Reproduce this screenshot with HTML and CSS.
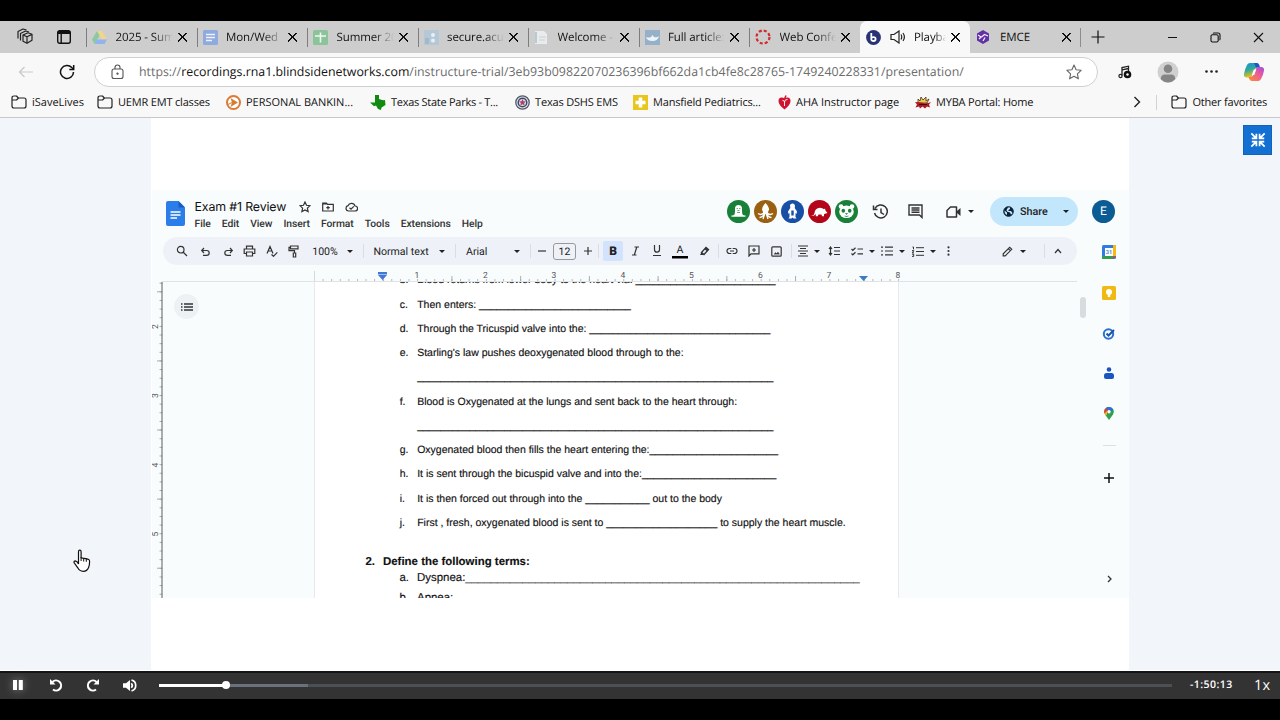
FILE: index.html
```
<!DOCTYPE html>
<html lang="en">
<head>
  <meta charset="UTF-8" />
  <meta name="viewport" content="width=device-width, initial-scale=1.0" />
  <title>Playback</title>
  <link rel="stylesheet" href="styles.css">
</head>
<body>

  <!-- Tabs -->
  <div class="tabbar">
    <div class="tab-tools">
      <svg width="18" height="18" viewBox="0 0 18 18" fill="none" stroke="#222" stroke-width="1.2" stroke-linejoin="round"><path d="M7 7l5-2.200 4 1.500v6l-5 3-4-2z"/><path d="M7 7l4 1.700 5-2.300M11 8.700v6.500"/><path d="M4.500 12.500v-7l5-2.500 3.500 1"/><path d="M2 10.500v-7l5-2.500 3.500 1"/></svg>
      <svg width="14" height="14" viewBox="0 0 14 14" fill="none" stroke="#111" stroke-width="1.400"><rect x="0.700" y="0.700" width="12.600" height="12.600" rx="2"/><path d="M1 2.500h12" stroke-width="3"/><path d="M4.200 4v9"/></svg>
    </div>
    <div class="tab">
      <svg width="15" height="15" viewBox="0 0 15 15"><path d="M5 1h5L5 10 2.500 14 0 9.500z" fill="#8cc9a0"/><path d="M5 1h5l5 8.500h-5z" fill="#f0d68a"/><path d="M5 9.500h10L12.500 14h-10z" fill="#92b4ee"/></svg>
      <span class="tab-title">2025 - Sum</span><span class="x"></span>
    </div>
    <div class="tab">
      <svg width="15" height="15" viewBox="0 0 15 15"><rect width="15" height="15" rx="1.500" fill="#8eaade"/><path d="M3 4.500h9M3 7.500h9M3 10.500h6" stroke="#eef3fb" stroke-width="1.300"/></svg>
      <span class="tab-title">Mon/Wed</span><span class="x"></span>
    </div>
    <div class="tab">
      <svg width="15" height="15" viewBox="0 0 15 15"><rect width="15" height="15" rx="1.500" fill="#8cc49a"/><path d="M2 6h11M7.500 2.500v10" stroke="#eef8f0" stroke-width="1.600"/></svg>
      <span class="tab-title">Summer 20</span><span class="x"></span>
    </div>
    <div class="tab">
      <svg width="15" height="15" viewBox="0 0 15 15"><rect width="15" height="15" fill="#b4c8d8"/><circle cx="9" cy="5" r="2" fill="#e8eff4"/><circle cx="9" cy="10.500" r="2" fill="#e8eff4"/><rect x="1" y="8" width="4" height="6" fill="#a2b9cc"/></svg>
      <span class="tab-title">secure.acu</span><span class="x"></span>
    </div>
    <div class="tab">
      <svg width="15" height="15" viewBox="0 0 15 15"><path d="M1 1h9l3 3v10H1z" fill="#e9ebec"/><path d="M2 2v11" stroke="#b7cbd1" stroke-width="2"/><path d="M5 7h7M5 10h6" stroke="#c9d1d4"/></svg>
      <span class="tab-title">Welcome -</span><span class="x"></span>
    </div>
    <div class="tab">
      <svg width="15" height="15" viewBox="0 0 15 15"><rect width="15" height="15" fill="#95b0c9"/><path d="M1 7q3 1 5 0l1.500-2L9 7q3 1 5-1-1 5-6.500 5T1 7z" fill="#edf3f7"/></svg>
      <span class="tab-title">Full article:</span><span class="x"></span>
    </div>
    <div class="tab no-line">
      <svg width="16" height="16" viewBox="0 0 16 16"><circle cx="8" cy="8" r="6.500" fill="none" stroke="#cf2c2e" stroke-width="2.200" stroke-dasharray="3.100 2"/></svg>
      <span class="tab-title">Web Confe</span><span class="x"></span>
    </div>
    <div class="tab active">
      <svg width="15" height="15" viewBox="0 0 15 15"><circle cx="7.500" cy="7.500" r="7.400" fill="#283274"/><path d="M5.300 3v6.300q.2 1.700 2.200 1.700t2.100-1.900-2.100-2-2.200 1.500" fill="none" stroke="#fff" stroke-width="1.800"/></svg>
      <svg class="sound" width="16" height="14" viewBox="0 0 16 14" fill="none" stroke="#222" stroke-width="1.200"><path d="M1 4.500h3L9 1v12L4 9.500H1z"/><path d="M11 4.500q1.500 2.500 0 5M13 3q2.800 4 0 8"/></svg>
      <span class="tab-title">Playba</span><span class="x"></span>
    </div>
    <div class="tab last">
      <svg width="14" height="14" viewBox="0 0 14 14"><path d="M7 0l6 3.500v7L7 14l-6-3.500v-7z" fill="#6230a4"/><path d="M2 5l3 2-2 2M5.500 7l3-2.500L12 6M9 7.500L7 11" fill="none" stroke="#f3ecfa" stroke-width="1.300"/></svg>
      <span class="tab-title">EMCE</span><span class="x"></span>
    </div>
    <svg class="plus" width="14" height="14" viewBox="0 0 14 14" stroke="#111" stroke-width="1.200"><path d="M7 .5v13M.5 7h13"/></svg>
    <div class="window-btns">
      <svg width="11" height="11" viewBox="0 0 11 11" stroke="#111"><path d="M1 5.500h9"/></svg>
      <svg width="11" height="11" viewBox="0 0 11 11" fill="none" stroke="#111" stroke-width="1.100"><rect x="1" y="2.800" width="7.200" height="7.200" rx="1.500"/><path d="M3 1.500Q3.300 1 4 1h4q2 0 2 2v4q0 .8-.5 1"/></svg>
      <svg width="11" height="11" viewBox="0 0 11 11" stroke="#111" stroke-width="1.100"><path d="M1 1l9 9M10 1l-9 9"/></svg>
    </div>
  </div>

  <!-- Address row -->
  <div class="address-row">
    <svg class="back" width="16" height="12" viewBox="0 0 16 12" fill="none" stroke="#c9c9c9" stroke-width="1.200"><path d="M15 6H1.500M6.500 1l-5 5 5 5"/></svg>
    <svg class="reload" width="16" height="16" viewBox="0 0 16 16" fill="none" stroke="#111" stroke-width="1.500"><path d="M14.500 8A6.500 6.500 0 1 1 12.800 3.600L14.500 5.300"/><path d="M14.700 1v4.400h-4.400"/></svg>
    <div class="url">
      <svg width="13" height="16" viewBox="0 0 13 16" fill="none" stroke="#555" stroke-width="1.100"><rect x="1" y="5" width="11" height="9.500" rx="2"/><path d="M4 5V3.500a2.500 2.500 0 0 1 5 0V5"/><circle cx="6.500" cy="9.700" r=".6" fill="#555"/></svg>
      <p><span class="scheme">https://</span><b>recordings.rna1.blindsidenetworks.com</b><span class="path">/instructure-trial/3eb93b09822070236396bf662da1cb4fe8c28765-1749240228331/presentation/</span></p>
      <svg class="star" width="16" height="16" viewBox="0 0 16 16" fill="none" stroke="#666" stroke-width="1.100" stroke-linejoin="round"><path d="M8 1l2.100 4.700 5 .6-3.700 3.500 1 5L8 12.300l-4.400 2.500 1-5L.9 6.300l5-.6z"/></svg>
    </div>
    <div class="address-tools">
      <svg width="14" height="14" viewBox="0 0 14 14"><path d="M4 10.500V2.500l6.500-1.300V6M4 4.800l6.500-1.300" fill="none" stroke="#222" stroke-width="1.300"/><circle cx="2.500" cy="11" r="1.600" fill="none" stroke="#222" stroke-width="1.200"/><circle cx="9.500" cy="9.500" r="3.800" fill="#111"/><circle cx="9.500" cy="9.500" r="1.200" fill="#fff"/></svg>
      <svg width="22" height="22" viewBox="0 0 22 22"><circle cx="11" cy="11" r="10.500" fill="#d0d0d0"/><circle cx="11" cy="7.800" r="4.300" fill="#858585"/><path d="M3.800 18q0-4.500 4-4.500h6.400q4 0 4 4.500-3 3.500-7.200 3.500T3.800 18z" fill="#858585"/></svg>
      <svg width="13" height="3" viewBox="0 0 13 3" fill="#222"><circle cx="1.500" cy="1.500" r="1.300"/><circle cx="6.500" cy="1.500" r="1.300"/><circle cx="11.500" cy="1.500" r="1.300"/></svg>
      <svg width="22" height="20" viewBox="0 0 22 20">
        <defs>
          <linearGradient id="cpA" x1="0" y1="0" x2="0.300" y2="1"><stop offset="0" stop-color="#1a8fe0"/><stop offset=".5" stop-color="#2fa99a"/><stop offset="1" stop-color="#f0c419"/></linearGradient>
          <linearGradient id="cpB" x1="1" y1="0" x2="0.200" y2="1"><stop offset="0" stop-color="#a24be0"/><stop offset=".5" stop-color="#ef5a9a"/><stop offset="1" stop-color="#f58a3c"/></linearGradient>
        </defs>
        <path d="M7 1h6q2 0 2.700 2l.8 2.500h-2q-2 0-2.700 2L9.500 13q-.8 2.500-3 2.500H4q-3.500 0-3-3.500.8-5 3-9Q5 1 7 1z" fill="url(#cpA)"/>
        <path d="M11 1h3q1.500 0 2.300 2l.7 2.500h-4z" fill="#2157c4"/>
        <path d="M15 19H9q-2 0-2.700-2l-.8-2h2q2 0 2.700-2L12.500 7.500q.8-2.500 3-2.500H18q3.500 0 3 3.500-.8 5-3 8.500-1 2-3 2z" fill="url(#cpB)"/>
        <path d="M10.800 7.500h2.500l-2 5.500H8.800z" fill="#fff"/>
      </svg>
    </div>
  </div>

  <!-- Favorites -->
  <div class="favorites">
    <a><svg width="16" height="14" viewBox="0 0 16 14" class="folder"><path d="M1 3q0-2 2-2h2.500L7.300 3H13q2 0 2 2v6q0 2-2 2H3q-2 0-2-2zM1 5h4.500l2-2"/></svg><span>iSaveLives</span></a>
    <a><svg width="16" height="14" viewBox="0 0 16 14" class="folder"><path d="M1 3q0-2 2-2h2.500L7.300 3H13q2 0 2 2v6q0 2-2 2H3q-2 0-2-2zM1 5h4.500l2-2"/></svg><span class="tight">UEMR EMT classes</span></a>
    <a><svg width="15" height="15" viewBox="0 0 15 15"><circle cx="7.500" cy="7.500" r="6.500" fill="#fff" stroke="#d97b35" stroke-width="2"/><path d="M4.500 3l7.500 4.500L4.500 12l1.500-4.500z" fill="#d97b35"/><path d="M1 10l5-2.500" stroke="#d97b35"/></svg><span>PERSONAL BANKIN...</span></a>
    <a><svg width="16" height="15" viewBox="0 0 16 15"><path d="M5 0h4v4q3 1.500 6 1l.5 5-4 2.500-.5 2.500-3-1-2-3.500-2 .8L0 7.500h5z" fill="#118a11"/></svg><span class="tighter">Texas State Parks - T...</span></a>
    <a><svg width="15" height="15" viewBox="0 0 15 15"><circle cx="7.500" cy="7.500" r="6.700" fill="#f1eedc" stroke="#50566e" stroke-width="1.300"/><circle cx="7.500" cy="7.500" r="4.300" fill="#d7dcec" stroke="#3b4777" stroke-width="1.500"/><path d="M7.500 4l1 2.300 2.500.2-1.900 1.600.6 2.500-2.200-1.400-2.200 1.400.6-2.500L4 6.500l2.500-.2z" fill="#b3425c"/></svg><span class="tight">Texas DSHS EMS</span></a>
    <a><svg width="15" height="15" viewBox="0 0 15 15"><rect width="15" height="15" fill="#e9c61c"/><path d="M7.500 2.500v10M2.500 7.500h10" stroke="#fff" stroke-width="3.600"/></svg><span class="tight">Mansfield Pediatrics...</span></a>
    <a><svg width="13" height="15" viewBox="0 0 13 15"><path d="M6.500 14.500Q.5 10 .5 6q0-3.500 3-3.500 2 0 3 1.200 1-1.200 3-1.200 3 0 3 3.500 0 4-6 8.500z" fill="#cf1430"/><path d="M6.500 11V6M4.500 5.500Q6 5 6.500 7 7 4 9.500 4.500" fill="none" stroke="#fff" stroke-width=".9"/><path d="M6.500 4L8 .5" stroke="#cf1430" stroke-width="1.500"/></svg><span>AHA Instructor page</span></a>
    <a><svg width="16" height="13" viewBox="0 0 16 13"><path d="M3 3l2 2L6 1l2 3 3-3v4l3-2-2 4H3z" fill="#e8c95e" stroke="#4a3210" stroke-width=".8"/><path d="M0 6q4 0 8 1t8-1l-2 2.500 1 3-3-1-2 2-2.500-2L5 12.500l-1-2-3.500 1L2 8.500z" fill="#b01722"/><path d="M4 8.500h8" stroke="#2b0a0a" stroke-width=".9"/></svg><span class="tight">MYBA Portal: Home</span></a>
    <div class="fav-end">
      <svg class="more" width="8" height="12" viewBox="0 0 8 12" fill="none" stroke="#222" stroke-width="1.400"><path d="M1.500 1l5 5-5 5"/></svg>
      <i></i>
      <svg width="16" height="14" viewBox="0 0 16 14" class="folder"><path d="M1 3q0-2 2-2h2.500L7.300 3H13q2 0 2 2v6q0 2-2 2H3q-2 0-2-2zM1 5h4.500l2-2"/></svg><span class="tight">Other favorites</span>
    </div>
  </div>

  <!-- Recording -->
  <div class="stage">
    <button class="swap" aria-label="Restore">
      <svg width="16" height="16" viewBox="0 0 18 18" fill="none" stroke="#fff" stroke-width="2"><path d="M1.500 1.500L6.500 6.500M7.200 2v5.200H2M16.500 1.500L11.500 6.500M10.800 2v5.200H16M1.500 16.500L6.500 11.500M7.200 16v-5.200H2M16.500 16.500L11.500 11.500M10.800 16v-5.200H16"/></svg>
    </button>
    <svg class="pointer" width="18" height="24" viewBox="0 0 18 24"><path d="M5.500 13.500V2.800q0-1.600 1.300-1.600T8.100 2.800v6l2.600.5 2.300.4 2.300.6q1.300.5 1.300 2.200 0 3.500-1 6-1.500 3.800-5.400 3.800-3.600 0-5.400-3.500L1 13.500q-.3-1.600 1.300-1.600 1.700.2 3.200 3z" fill="#fff" stroke="#111" stroke-width="1.200"/><path d="M8.100 8v4M10.700 9v3.500M13.300 9.600v3.200" stroke="#111"/></svg>

    <div class="slide">
      <div class="docs">
        <div class="docs-header">
          <svg class="docs-logo" width="19" height="25" viewBox="0 0 19 25"><path d="M2 0h10.500L19 6.500V23q0 2-2 2H2q-2 0-2-2V2q0-2 2-2z" fill="#2b7de9"/><path d="M12.500 0L19 6.500h-6.500z" fill="#1a5cc0"/><path d="M4.500 11h10M4.500 14h10M4.500 17h6.500" stroke="#fff" stroke-width="1.400"/></svg>
          <div class="docs-names">
            <div class="docs-title">
              <span>Exam #1 Review</span>
              <svg width="12" height="12" viewBox="0 0 12 12" class="ln"><path d="M6 1l1.500 3.300 3.500.4-2.600 2.400.7 3.500L6 8.900l-3.100 1.700.7-3.500L1 4.700l3.500-.4z"/></svg>
              <svg width="12" height="10" viewBox="0 0 12 10" class="ln"><path d="M.7 1h3.800l1 1.300h5.800V9H.7zM6 4v3.500M4.300 5.700h3.500M.7 2h4"/></svg>
              <svg width="13" height="10" viewBox="0 0 13 10" class="ln"><path d="M3.500 9A2.700 2.700 0 0 1 3 3.700 3.700 3.700 0 0 1 10 4a2.500 2.500 0 0 1 .2 5zM4.500 5.800L6 7.200l2.800-2.800"/></svg>
            </div>
            <div class="docs-menu"><span>File</span><span>Edit</span><span>View</span><span>Insert</span><span>Format</span><span>Tools</span><span>Extensions</span><span>Help</span></div>
          </div>
          <div class="docs-actions">
            <div class="people">
              <svg width="23" height="23" viewBox="0 0 23 23"><circle cx="11.500" cy="11.500" r="11.500" fill="#188038"/><path d="M3.500 16l3.500-1q1-1 1-4V8.500Q8 5 11.500 5T15 8.500V11q0 3 1 4l3.500 1-2 .7h-12z" fill="#fff"/><circle cx="10.200" cy="8.500" r=".6" fill="#188038"/><circle cx="12.800" cy="8.500" r=".6" fill="#188038"/><path d="M10.500 10.500h2M10 12.500h3" stroke="#188038" stroke-width=".7"/></svg>
              <svg width="23" height="23" viewBox="0 0 23 23"><circle cx="11.500" cy="11.500" r="11.500" fill="#9a6011"/><path d="M11.500 3q3.500 3.500 3.500 6.500l-1.500 4h-4L8 9.500Q8 6.500 11.500 3z" fill="#fff"/><path d="M10.500 12q-3 4-6.500 1.500M10.500 13q-1.500 4.500-5 4.500M11 13l-2 6M12.500 12q3 4 6.500 1.500M12.500 13q1.500 4.500 5 4.500M12 13l2 6" fill="none" stroke="#fff" stroke-width="1.300"/></svg>
              <svg width="23" height="23" viewBox="0 0 23 23"><circle cx="11.500" cy="11.500" r="11.500" fill="#174ea6"/><path d="M9 5q1-2 3-1.500t2 2.500l-.3 2 2.300 3.500-.5 2.500-1-1v4l1 1.500h-3l-1-1-1 1h-3l1-1.500v-4l-1 1-.5-2.500L9.300 8z" fill="#fff"/><path d="M10.300 10.500h2.400v5h-2.400z" fill="#174ea6"/></svg>
              <svg width="23" height="23" viewBox="0 0 23 23"><circle cx="11.500" cy="11.500" r="11.500" fill="#b3061a"/><path d="M3 15.500q3 .5 3.500-2.500Q7 8 12 7.700q2.500 0 4 1.500l1-.8.5 2 2 2.500-2.500.8-1 .5v2h-2l-.5-1.700h-3l-.8 1.700h-2l.3-2.200-2 1.500q-1 .7-3 0z" fill="#fff"/></svg>
              <svg width="23" height="23" viewBox="0 0 23 23"><circle cx="11.500" cy="11.500" r="11.500" fill="#188038"/><circle cx="6" cy="6.500" r="2.300" fill="#fff"/><circle cx="17" cy="6.500" r="2.300" fill="#fff"/><ellipse cx="11.500" cy="11.800" rx="7.300" ry="6.300" fill="#fff"/><ellipse cx="8.300" cy="10.800" rx="1.800" ry="2" fill="#188038"/><ellipse cx="14.700" cy="10.800" rx="1.800" ry="2" fill="#188038"/><path d="M10.500 13.500h2l-1 1zM9.500 16q2 .8 4 0" fill="#188038" stroke="#188038" stroke-width=".6"/></svg>
            </div>
            <svg class="history" width="17" height="16" viewBox="0 0 17 16" fill="none" stroke="#333" stroke-width="1.500"><path d="M3 4.500A6.500 6.500 0 1 1 2.500 9M1.500 1.500V5.500h4M9 4.500v4l3 2"/></svg>
            <svg class="comment" width="15" height="15" viewBox="0 0 15 15" fill="none" stroke="#333" stroke-width="1.400"><path d="M1 1h13v12.500L11.500 11H1zM3.500 4h8M3.500 6h8M3.500 8.200h8"/></svg>
            <svg class="camera" width="15" height="12" viewBox="0 0 15 12"><path d="M4.500 1h6v10H1V4.500z" fill="none" stroke="#333" stroke-width="1.500" stroke-linejoin="round"/><path d="M11 5l3.500-3v8L11 7z" fill="#333"/></svg>
            <i class="caret"></i>
            <div class="share">
              <svg width="11" height="11" viewBox="0 0 11 11"><circle cx="5.500" cy="5.500" r="4.800" fill="#0b2236" stroke="#0b2236"/><path d="M1.500 4.500L4 6.500v2.500Q1.500 8 1.500 4.500zM5 1.500h2v1.500L5.500 4v1h2.500l1.500 2q-.5 1-1.500 1.500l-1-2L4 5.500 3.500 4z" fill="#c2e7ff"/></svg>
              <b>Share</b><i class="caret"></i>
            </div>
            <div class="me">E</div>
          </div>
        </div>

        <div class="toolbar">
          <span><svg width="12" height="12" viewBox="0 0 12 12" class="ln"><circle cx="4.700" cy="4.700" r="3.300"/><path d="M7 7l4 4"/></svg></span>
          <span><svg width="11" height="11" viewBox="0 0 11 11" class="ln"><path d="M4 2L1.700 4.500 4 7M2 4.500h4.700q2.500 0 2.500 2.400T6.700 9.300H3"/></svg></span>
          <span><svg width="11" height="11" viewBox="0 0 11 11" class="ln"><path d="M7 2l2.300 2.500L7 7M9 4.500H4.300Q1.800 4.500 1.800 6.900T4.300 9.300H8"/></svg></span>
          <span><svg width="13" height="12" viewBox="0 0 13 12" class="ln"><path d="M3.500 4V1.200h6V4M3.500 8.500H1.200V4h10.600v4.500H9.500M3.500 7h6v4h-6z"/></svg></span>
          <span><svg width="12" height="12" viewBox="0 0 12 12" class="ln"><path d="M1 8.500L4 1.500l3 7M2 6h4M5.500 9.500l2 1.800 3.800-4"/></svg></span>
          <span><svg width="12" height="13" viewBox="0 0 12 13" class="ln"><path d="M2.500 1h7.500v2.800H2.500zM2.500 2.300H1v3.400h5.500V8M5.300 8h2.400v4H5.300z"/></svg></span>
          <span class="t-zoom">100%</span>
          <span><i class="caret"></i></span>
          <span class="sep"></span>
          <span class="t-style">Normal text</span>
          <span><i class="caret"></i></span>
          <span class="sep"></span>
          <span class="t-font">Arial</span>
          <span><i class="caret"></i></span>
          <span class="sep"></span>
          <span><svg width="10" height="10" viewBox="0 0 10 10" class="ln"><path d="M1 5h8"/></svg></span>
          <span><em class="size">12</em></span>
          <span><svg width="10" height="10" viewBox="0 0 10 10" class="ln"><path d="M1 5h8M5 1v8"/></svg></span>
          <span class="sep"></span>
          <span class="bold-on">B</span>
          <span><svg width="9" height="10" viewBox="0 0 9 10" class="ln"><path d="M3.500 1H8M1 9h4.500M5.800 1L3.300 9"/></svg></span>
          <span><svg width="10" height="12" viewBox="0 0 10 12" class="ln"><path d="M2.500 0v4.500q0 2.700 2.500 2.700t2.500-2.700V0M1 10.500h8"/></svg></span>
          <span class="color-a">A</span>
          <span><svg width="11" height="11" viewBox="0 0 11 11"><path d="M2.500 6.500L7 1.500l2.500 2L5 8.500z" fill="none" stroke="#333" stroke-width="1.300"/><path d="M2.500 6.300L5 8.500 3.500 9H1zM5.500 3.200L7 1.500l2.500 2L8 5.300z" fill="#333"/></svg></span>
          <span class="sep"></span>
          <span><svg width="12" height="8" viewBox="0 0 12 8" class="ln"><path d="M5.300 1.500H3.500a2.500 2.500 0 0 0 0 5h1.800M6.700 1.500h1.800a2.500 2.500 0 0 1 0 5H6.700M4 4h4"/></svg></span>
          <span><svg width="12" height="12" viewBox="0 0 12 12" class="ln"><path d="M1 1h10v7.800H3L1 11zM6 3v4M4 5h4"/></svg></span>
          <span><svg width="11" height="11" viewBox="0 0 11 11" class="ln"><rect x=".8" y=".8" width="9.400" height="9.400" rx="1"/><path d="M3 8.200l1.500-1.800 1.200 1.200L7 6l1.500 2.200z" fill="#333" stroke-width=".3"/></svg></span>
          <span class="sep"></span>
          <span><svg width="12" height="12" viewBox="0 0 12 12" class="ln"><path d="M1 1h10M3 3.500h6M1 6h10M3 8.500h6M1 11h10"/></svg></span>
          <span><i class="caret"></i></span>
          <span><svg width="12" height="10" viewBox="0 0 12 10" class="ln"><path d="M2.500 1.500v7M1 3l1.500-2L4 3M1 7l1.500 2L4 7M6 1.500h6M6 5h6M6 8.500h6"/></svg></span>
          <span><svg width="12" height="9" viewBox="0 0 12 9" class="ln"><path d="M.5 2l1.300 1.300L4.500.8M.5 6.500l1.300 1.300 2.700-2.500M6.500 2H12M6.500 6.800H12"/></svg></span>
          <span><i class="caret"></i></span>
          <span><svg width="12" height="10" viewBox="0 0 12 10" class="ln"><path d="M0 1.200h2M0 5h2M0 8.800h2M4 1.200h8M4 5h8M4 8.800h8"/></svg></span>
          <span><i class="caret"></i></span>
          <span><svg width="12" height="11" viewBox="0 0 12 11" class="ln"><path d="M.5 1h1v2.300M0 4.600h1.800L.3 6.800h1.700M0 8.200h1.700v2.200H0M4 1.700h8M4 5.500h8M4 9.300h8" stroke-width="1"/></svg></span>
          <span><i class="caret"></i></span>
          <span><svg width="3" height="10" viewBox="0 0 3 10" fill="#333"><circle cx="1.500" cy="1.300" r="1.100"/><circle cx="1.500" cy="5" r="1.100"/><circle cx="1.500" cy="8.700" r="1.100"/></svg></span>
          <span></span>
          <span><svg width="11" height="11" viewBox="0 0 11 11" class="ln"><path d="M1.200 9.800v-2l6.500-6.500 2 2-6.500 6.500zM6.300 2.700l2 2"/></svg></span>
          <span><i class="caret"></i></span>
          <span></span>
          <span class="sep"></span>
          <span><svg width="8" height="6" viewBox="0 0 8 6" class="ln"><path d="M1 5l3-3.500L7 5"/></svg></span>
        </div>

        <div class="rail">
          <svg width="14" height="14" viewBox="0 0 14 14"><rect width="14" height="14" rx="1.500" fill="#2f7de1"/><path d="M11 0h3v11h-3z" fill="#f5b912"/><path d="M0 11h11v3H0z" fill="#2f9e4f"/><path d="M11 11h3l-3 3z" fill="#e04235"/><path d="M3 3h8v8H3z" fill="#fff"/><text x="7" y="9.300" text-anchor="middle" class="cal">31</text></svg>
          <svg width="14" height="14" viewBox="0 0 14 14"><rect width="14" height="14" rx="1.500" fill="#efbb13"/><circle cx="7" cy="6" r="3" fill="#fff"/><path d="M5.800 8h2.400v3H5.800z" fill="#fff"/></svg>
          <svg width="14" height="12" viewBox="0 0 14 12" fill="none"><circle cx="6.500" cy="6" r="4.700" stroke="#2a6fd0" stroke-width="2"/><path d="M4.500 5.500l2 2L12 2" stroke="#1d55ae" stroke-width="2"/></svg>
          <svg width="10" height="12" viewBox="0 0 10 12" fill="#1b55c4"><circle cx="5" cy="2.500" r="2.300"/><path d="M2.500 6h5Q10 6 10 8.500V10q0 2-2 2H2q-2 0-2-2V8.500Q0 6 2.500 6z"/></svg>
          <svg width="10" height="13" viewBox="0 0 10 13"><path d="M5 13L1 7.500Q-1 3 2 1 5-1 8 1q3 2 1 6.500z" fill="#2fa050"/><path d="M.5 6Q-.5 3 2 1 3.500 0 5 0v5L1.500 8z" fill="#db4336"/><path d="M2 1q3-2 6 0l1.200 2L6 4 4 3.500z" fill="#2a70dd"/><path d="M.6 6.500L3 4v3.500l-1.300 1z" fill="#f2b91d"/><circle cx="5" cy="4.800" r="1.700" fill="#fff"/></svg>
          <hr>
          <svg class="add" width="10" height="10" viewBox="0 0 10 10" stroke="#111" stroke-width="1.500"><path d="M5 0v10M0 5h10"/></svg>
          <svg class="open" width="5" height="8" viewBox="0 0 5 8" fill="none" stroke="#333" stroke-width="1.300"><path d="M1 1l3 3-3 3"/></svg>
        </div>

        <svg class="ruler-h" width="935" height="17" viewBox="0 0 935 17">
          <defs>
            <pattern id="eighth" x="162" y="0" width="8.590" height="17" patternUnits="userSpaceOnUse"><path d="M0 14h1v3H0z" fill="#b4b9bd"/></pattern>
            <pattern id="half" x="162" y="0" width="68.720" height="17" patternUnits="userSpaceOnUse"><path d="M0 11h1v6H0z" fill="#a8adb1"/></pattern>
          </defs>
          <rect x="162" width="585" height="17" fill="url(#eighth)"/>
          <rect x="162" width="585" height="17" fill="url(#half)"/>
          <path d="M162.500 6v11" stroke="#d5dadd"/>
          <path d="M10 16.500h915" stroke="#dfe3e6"/>
          <g class="nums"><text x="265" y="13">1</text><text x="333.500" y="13">2</text><text x="402" y="13">3</text><text x="471" y="13">4</text><text x="539.500" y="13">5</text><text x="608.500" y="13">6</text><text x="677" y="13">7</text><text x="746" y="13">8</text></g>
          <path d="M226 7h9v3l-4.500 5L226 10z" fill="#4079d8"/><path d="M226 9.500h9" stroke="#dbe7fa" stroke-width=".6"/>
          <path d="M707 11h9l-4.500 5z" fill="#3c7cc0"/>
        </svg>

        <div class="docs-body">
          <svg class="ruler-v" width="11" height="316" viewBox="0 0 11 316">
            <defs>
              <pattern id="veighth" x="0" y="0.700" width="11" height="8.640" patternUnits="userSpaceOnUse"><path d="M7.500 0h3v1h-3z" fill="#a5aaae"/></pattern>
              <pattern id="vhalf" x="0" y="9.300" width="11" height="69.100" patternUnits="userSpaceOnUse"><path d="M5 0h5v1H5z" fill="#a5aaae"/></pattern>
            </defs>
            <rect width="11" height="316" fill="url(#veighth)"/><rect width="11" height="316" fill="url(#vhalf)"/>
            <path d="M10 0v316" stroke="#777" stroke-width="1.200"/>
            <g class="nums"><text transform="translate(6 44.500) rotate(-90)">2</text><text transform="translate(6 113.500) rotate(-90)">3</text><text transform="translate(6 183) rotate(-90)">4</text><text transform="translate(6 252) rotate(-90)">5</text></g>
          </svg>
          <div class="outline">
            <div><svg width="12" height="8" viewBox="0 0 12 8" stroke="#333" stroke-width="1.300"><path d="M0 1h1.500M0 4h1.500M0 7h1.500M3 1h9M3 4h9M3 7h9"/></svg></div>
          </div>
          <div class="page">
            <ol class="blood">
              <li><i>b.</i>Blood returns from lower body to the heart via: ________________________</li>
              <li><i>c.</i>Then enters: __________________________</li>
              <li><i>d.</i>Through the Tricuspid valve into the: _______________________________</li>
              <li><i>e.</i>Starling's law pushes deoxygenated blood through to the:</li>
              <li><i></i>_____________________________________________________________</li>
              <li><i>f.</i>Blood is Oxygenated at the lungs and sent back to the heart through:</li>
              <li><i></i>_____________________________________________________________</li>
              <li><i>g.</i>Oxygenated blood then fills the heart entering the:______________________</li>
              <li><i>h.</i>It is sent through the bicuspid valve and into the:_______________________</li>
              <li><i>i.</i>It is then forced out through into the ___________ out to the body</li>
              <li><i>j.</i>First , fresh, oxygenated blood is sent to ___________________ to supply the heart muscle.</li>
            </ol>
            <h2><i>2.</i>Define the following terms:</h2>
            <ol class="terms">
              <li><i>a.</i>Dyspnea:______________________________________________________________</li>
              <li><i>b.</i>Apnea:</li>
            </ol>
          </div>
          <div class="scroll"></div>
        </div>
      </div>
    </div>
  </div>

  <!-- Player controls -->
  <div class="player">
    <svg class="pause" width="10" height="12" viewBox="0 0 10 12" fill="#fff"><path d="M0 1h4v10H0zM5.800 1h4v10h-4z"/></svg>
    <svg width="14" height="14" viewBox="0 0 14 14"><path d="M3.500 4A5 5 0 1 1 4 11.500" fill="none" stroke="#fff" stroke-width="2.100"/><path d="M1 1v5.500h5.500z" fill="#fff"/></svg>
    <svg width="14" height="14" viewBox="0 0 14 14"><path d="M10.500 4A5 5 0 1 0 10 11.500" fill="none" stroke="#fff" stroke-width="2.100"/><path d="M13 1v5.500H7.500z" fill="#fff"/></svg>
    <svg width="14" height="13" viewBox="0 0 14 13"><path d="M0 4.300h3L7 1v11L3 8.700H0z" fill="#fff"/><path d="M8.300 4.200q2 2.300 0 4.600M8.500 1.200q4.200 1 4.200 5.300t-4.200 5.300" fill="none" stroke="#fff" stroke-width="1.700"/></svg>
    <div class="progress"><div class="loaded"></div><div class="played"></div></div>
    <span class="time">-1:50:13</span>
    <span class="rate">1x</span>
  </div>

</body>
</html>
```
FILE: styles.css
```
* {
  box-sizing: border-box;
}

body {
  margin: 0;
  padding-top: 21px;
  width: 1280px;
  height: 720px;
  overflow: hidden;
  background: #000;
  font-family: "Open Sans", "Noto Sans", sans-serif;
  text-rendering: geometricPrecision;
}

svg {
  display: block;
  flex-shrink: 0;
}

i {
  font-style: normal;
}

/* tabs */
.tabbar {
  display: flex;
  align-items: center;
  height: 32px;
  background: #cdcdcd;
  font-size: 11.5px;
  color: #111;
}

.tab-tools {
  display: flex;
  align-items: center;
  gap: 23px;
  width: 86px;
  padding-left: 16px;
}

.tab {
  display: flex;
  align-items: center;
  width: 110.5px;
  height: 32px;
  padding: 0 10px 0 6px;
  background: linear-gradient(#7d7d7d, #7d7d7d) no-repeat 0 7px / 1px 19px;
}

.tab-title {
  flex: 1;
  margin: 0 5px 0 8.5px;
  overflow: hidden;
  white-space: nowrap;
  letter-spacing: -0.1px;
  -webkit-mask-image: linear-gradient(to right, #000 65%, transparent);
}

.x {
  width: 9px;
  height: 9px;
  background:
    linear-gradient(45deg, transparent 45%, #111 45%, #111 56%, transparent 56%),
    linear-gradient(-45deg, transparent 45%, #111 45%, #111 56%, transparent 56%);
}

.tab.active {
  background: #f8f8f8;
  border-radius: 7px 7px 0 0;
}

.active .sound {
  margin-left: 9px;
}

.tab.last {
  background: linear-gradient(#8d8d8d, #8d8d8d) no-repeat 100% 7px / 1px 19px;
}

.last .tab-title {
  margin-left: 10px;
  -webkit-mask-image: none;
}

.plus {
  margin-left: 10px;
}

.window-btns {
  display: flex;
  gap: 32px;
  margin-left: auto;
  padding-right: 16px;
}

/* address row */
.address-row {
  display: flex;
  align-items: center;
  height: 37px;
  background: #f8f8f8;
}

.back {
  margin-left: 18px;
}

.reload {
  margin-left: 25px;
}

.url {
  display: flex;
  align-items: center;
  width: 1004px;
  height: 30px;
  margin-left: 19px;
  padding: 0 15px 0 16px;
  background: #fff;
  border: 1px solid #cfcfcf;
  border-radius: 15px;
  color: #6c6c6c;
  font-size: 12.37px;
}

.url p {
  flex: 1;
  margin: 0 0 0 15px;
  white-space: nowrap;
}

.url b {
  font-weight: normal;
  color: #111;
}

.address-tools {
  display: flex;
  flex: 1;
  align-items: center;
  justify-content: space-between;
  padding: 0 15px 0 20px;
}

/* favorites */
.favorites {
  display: grid;
  grid-template-columns: 86px 129px 144px 145px 118px 145px 137px 1fr auto;
  align-items: center;
  height: 28px;
  padding: 0 13px 3px 11px;
  border-bottom: 1px solid #c8c8c8;
  background: #f8f8f8;
  font-size: 11px;
  color: #111;
  white-space: nowrap;
}

.favorites a,
.fav-end {
  display: flex;
  align-items: center;
  gap: 5px;
}

.favorites .tight {
  letter-spacing: -0.18px;
}

.favorites .tighter {
  letter-spacing: -0.27px;
}

.folder {
  fill: none;
  stroke: #222;
  stroke-width: 1.2;
  stroke-linejoin: round;
}

.fav-end i {
  width: 1px;
  height: 15px;
  margin: 0 9px 0 10px;
  background: #d2d2d2;
}

/* recording area */
.stage {
  position: relative;
  height: 553px;
  background: #f2f6fa;
  border-bottom: 1px solid #fff;
}

.swap {
  position: absolute;
  right: 8px;
  top: 7px;
  display: flex;
  align-items: center;
  justify-content: center;
  width: 29px;
  height: 30px;
  padding: 0;
  border: 1px solid #1262b8;
  background: #1270d2;
}

.pointer {
  position: absolute;
  left: 73px;
  top: 431px;
}

.slide {
  width: 978px;
  height: 552px;
  margin: 0 auto;
  padding: 72px 0 0 1px;
  background: #fff;
}

.docs {
  display: grid;
  grid-template-columns: 935px 42px;
  grid-template-rows: 47px 28px 17px 316px;
  width: 977px;
  height: 408px;
  background: #f9fcfd;
  font-family: Roboto, sans-serif;
  color: #222;
}

.docs-header {
  display: flex;
  grid-column: 1 / 3;
  padding: 7px 14px 0 14px;
}

.docs-logo {
  margin-top: 4px;
}

.docs-names {
  margin-left: 9.5px;
}

.docs-title {
  display: flex;
  align-items: center;
  height: 19px;
  font-family: Inter, Roboto, sans-serif;
  font-size: 12.4px;
  letter-spacing: -0.15px;
  color: #111;
}

.docs-title svg {
  margin-left: 11px;
}

.docs-title span {
  width: 93px;
  white-space: nowrap;
}

.docs-title svg:first-of-type {
  margin-left: 11px;
}

.docs-menu {
  display: flex;
  gap: 11px;
  font-size: 10.32px;
  font-weight: 500;
  letter-spacing: -0.05px;
  line-height: 15px;
  color: #333;
}

.ln {
  fill: none;
  stroke: #333;
  stroke-width: 1.2;
}

.docs-actions {
  display: flex;
  align-items: center;
  height: 29px;
  margin-left: auto;
}

.people {
  display: flex;
  gap: 4px;
}

.history {
  margin-left: 14px;
}

.comment {
  margin-left: 19px;
}

.camera {
  margin: 0 7px 0 23px;
}

.caret {
  border: 3px solid transparent;
  border-top: 3.5px solid #222;
  border-bottom: 0;
}

.share {
  display: flex;
  align-items: center;
  width: 88px;
  height: 29px;
  margin: 0 14px 0 16px;
  padding: 0 9px 0 13px;
  border-radius: 15px;
  background: #c2e7fc;
}

.share b {
  flex: 1;
  margin-left: 6px;
  font-size: 10.8px;
  font-weight: 500;
}

.me {
  width: 23px;
  border-radius: 50%;
  background: #0b5b95;
  color: #fff;
  font-size: 12px;
  line-height: 23px;
  text-align: center;
}

/* toolbar cells */
.toolbar {
  display: grid;
  grid-template-columns:
    23px 25px 20px 23px 22px 22px 40px 10px 16px 60px 22px 4px 53px 14px 12px
    12px 33px 13px 9px 20px 24px 20px 26px 22px 6px 22px 22px 23px 7px
    16px 11px 24px 21px 9px 21px 9px 23px 7px 24px 36px 22px 9px 13px 8px 19px;
  width: 914px;
  height: 28px;
  margin-left: 11px;
  padding-left: 7px;
  border-radius: 14px;
  background: #eef2f8;
  font-size: 10.6px;
}

.toolbar > span {
  display: flex;
  align-items: center;
  justify-content: center;
  white-space: nowrap;
}

.toolbar .sep {
  background: linear-gradient(#d9dee5, #d9dee5) no-repeat center / 1px 14px;
}

.toolbar .t-font {
  justify-content: flex-start;
  padding-left: 9px;
}

.size {
  width: 23px;
  border: 1px solid #999;
  border-radius: 3px;
  font-style: normal;
  font-size: 10.5px;
  line-height: 15px;
  text-align: center;
}

.toolbar .bold-on {
  margin: 4px 0;
  border-radius: 2px;
  background: #d3e3fd;
  font-size: 12px;
  font-weight: 900;
}

.toolbar .color-a {
  background: linear-gradient(#000, #000) no-repeat center 19px / 16px 2.500px;
  padding-bottom: 3px;
}

/* side rail */
.rail {
  display: flex;
  flex-direction: column;
  align-items: center;
  grid-row: 2 / 5;
  grid-column: 2;
  padding-top: 8px;
  margin-left: 2px;
}

.rail svg {
  margin-bottom: 27.400px;
}

.rail hr {
  width: 13px;
  margin: -2px 0 27px;
  border: 0;
  border-top: 1px solid #dde0e3;
}

.rail .add {
  margin-bottom: 92px;
}

.cal {
  font: bold 5.5px Roboto, sans-serif;
  fill: #2f7de1;
}

.nums {
  font-size: 8.5px;
  fill: #555;
  text-anchor: middle;
}

/* document */
.docs-body {
  display: flex;
  overflow: hidden;
}

.ruler-h,
.docs-body {
  grid-column: 1;
}

.outline {
  width: 151px;
  padding: 12px 0 0 11px;
}

.outline div {
  display: flex;
  align-items: center;
  justify-content: center;
  width: 25px;
  height: 25px;
  border-radius: 50%;
  background: #edf1f4;
}

.page {
  width: 585px;
  border: 1px solid #e6eaed;
  border-width: 0 1px;
  background: #fff;
  font-family: "Liberation Sans", Arial, sans-serif;
  font-size: 10.5px;
  color: #111;
  white-space: nowrap;
  -webkit-text-stroke: 0.15px #111;
}

.page ol,
.page h2 {
  margin: 0;
  padding: 0;
  list-style: none;
}

.page i {
  display: inline-block;
  width: 17.5px;
}

.page .blood {
  margin-top: -13.700px;
  padding-left: 84.7px;
}

.blood li {
  height: 24.270px;
  line-height: 24.270px;
}

.page h2 {
  margin-top: 20px;
  padding-left: 50.5px;
  font-size: 11.45px;
  line-height: 15px;
}

.page .terms {
  padding-left: 84.5px;
  font-size: 11.45px;
}

.terms li {
  height: 19.500px;
  line-height: 16px;
}

.scroll {
  width: 6px;
  height: 21px;
  margin: 15px 0 0 auto;
  border-radius: 3px;
  background: #d9dcde;
}

.docs-body .scroll {
  margin-right: 1px;
}

/* player */
.player {
  display: flex;
  align-items: center;
  height: 28px;
  padding: 0 10px 2px 13px;
  border-top: 2px solid #151515;
  background: #333;
  color: #fff;
}

.player svg {
  margin-right: 23px;
}

.player .pause {
  margin-right: 26px;
  filter: drop-shadow(0 0 4px #888);
}

.progress {
  position: relative;
  width: 1013px;
  height: 3px;
  margin-left: -1px;
  background: #4b5054;
}

.loaded {
  width: 149px;
  height: 3px;
  background: #69727c;
}

.played {
  position: absolute;
  left: 0;
  top: 0;
  width: 67px;
  height: 3px;
  background: #fff;
}

.played::after {
  content: "";
  position: absolute;
  right: -4px;
  top: -2.500px;
  width: 8px;
  height: 8px;
  border-radius: 50%;
  background: #fff;
}

.time {
  margin-left: 18px;
  font-size: 10.5px;
  font-weight: 600;
  letter-spacing: 0.45px;
}

.rate {
  margin-left: auto;
  font-size: 14.5px;
}
```
